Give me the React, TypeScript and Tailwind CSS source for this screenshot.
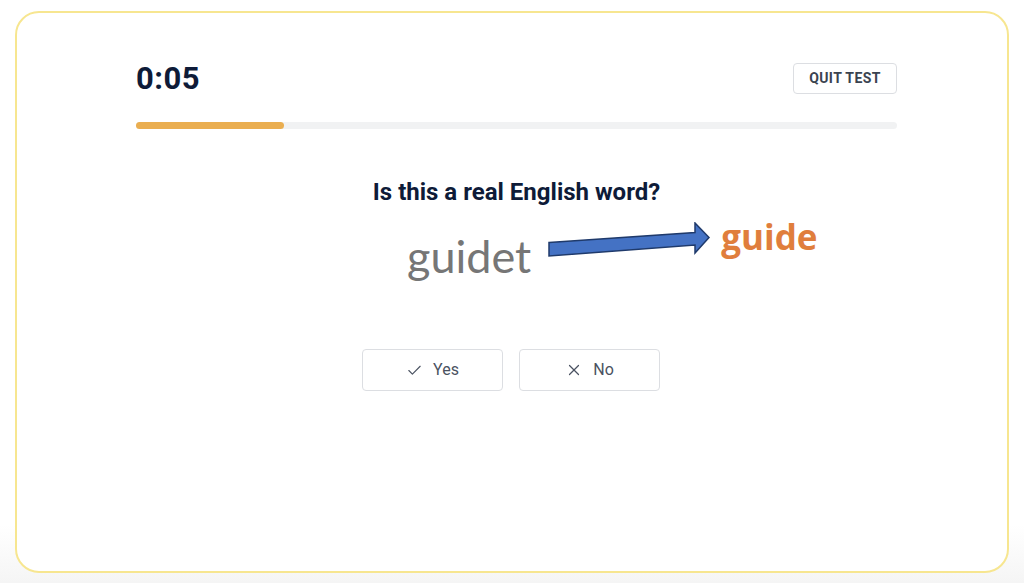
import { Check, X } from "lucide-react";

export default function App() {
  return (
    <div className="h-[583px] w-[1024px] bg-gradient-to-b from-white from-[90%] to-[#f5f5f5] pt-[11px] pl-[15px]">
      <div className="h-[562px] w-[994px] rounded-[24px] border-2 border-[#f7e690] bg-white pl-[119px] pr-[110px] pt-[50px] font-['Roboto',sans-serif]">
        <div className="flex items-center justify-between">
          <span className="text-[31px] font-bold leading-none tracking-[0.5px] text-[#0e1b38]">0:05</span>
          <button className="h-[31px] w-[104px] rounded-[4px] border border-[#dcdee2] text-[14px] font-bold tracking-[0.4px] text-[#3a4350]">
            QUIT TEST
          </button>
        </div>

        <div className="mt-[28px] h-[7px] rounded-full bg-[#f1f2f3]">
          <div className="h-full w-[148px] rounded-full bg-[#eaae50]" />
        </div>

        <h1 className="mt-[51px] text-center text-[24px] font-bold leading-none text-[#0e1b38]">
          Is this a real English word?
        </h1>

        <div className="mt-[12px] flex items-start pl-[271px]">
          <span className="mt-[18px] font-['Lato',sans-serif] text-[45px] font-normal leading-none text-[#767676]">
            guidet
          </span>
          <svg className="ml-[16px] mt-[6px]" width="164" height="36" viewBox="0 0 164 36">
            <path
              d="M2 20.5 L148 10.5 L148 1 L162 15.5 L148 31 L148 23 L2 34 Z"
              fill="#4472c4"
              stroke="#1f3a6b"
              strokeWidth="1.5"
              strokeLinejoin="miter"
            />
          </svg>
          <span className="ml-[10px] mt-[3px] font-['Open_Sans',sans-serif] text-[35px] font-bold leading-none text-[#e07e3c]">
            guide
          </span>
        </div>

        <div className="mt-[70px] flex justify-center gap-[16px] pr-[11px]">
          <button className="flex h-[42px] w-[141px] items-center justify-center gap-[10px] rounded-[4px] border border-[#dcdee2] text-[16px] text-[#4a5261]">
            <Check className="size-[17px]" strokeWidth={1.6} /> Yes
          </button>
          <button className="flex h-[42px] w-[141px] items-center justify-center gap-[10px] rounded-[4px] border border-[#dcdee2] text-[16px] text-[#4a5261]">
            <X className="size-[18px]" strokeWidth={1.6} /> No
          </button>
        </div>
      </div>
    </div>
  );
}
